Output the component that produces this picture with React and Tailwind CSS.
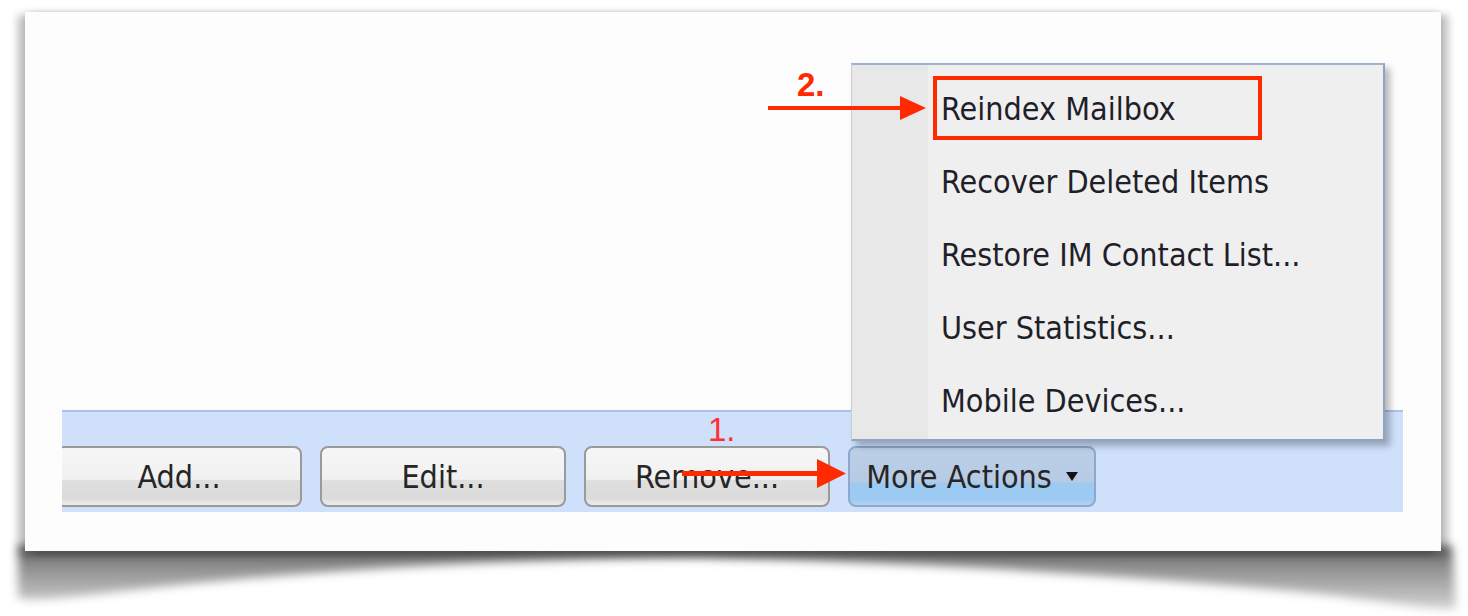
import React from "react";

// Toolbar with an open "More Actions" dropdown, annotated with red arrows

const MENU_ITEMS = [
  "Reindex Mailbox",
  "Recover Deleted Items",
  "Restore IM Contact List...",
  "User Statistics...",
  "Mobile Devices...",
];

const UI_FONT = "font-['DejaVu_Sans_Condensed','DejaVu_Sans',sans-serif]";
const NOTE_FONT = "font-['Liberation_Sans_Narrow','Liberation_Sans',sans-serif]";

function GreyButton({ label, className = "" }) {
  return (
    <button
      className={`h-[61px] w-[246px] shrink-0 rounded-[8px] border-2 border-[#9a9a9a] bg-[linear-gradient(to_bottom,#f6f6f6_0%,#f1f1f1_55%,#dfdfdf_57%,#dadada_88%,#ececec_100%)] text-[32px] leading-none text-[#262626] ${className}`}
    >
      {label}
    </button>
  );
}

function CurlShadow() {
  return (
    <svg className="absolute left-0 top-0" width="1468" height="616" viewBox="0 0 1468 616">
      <defs>
        <filter id="blur" x="-5%" y="-50%" width="110%" height="200%">
          <feGaussianBlur stdDeviation="5" />
        </filter>
        <linearGradient id="shade" x1="0" y1="546" x2="0" y2="610" gradientUnits="userSpaceOnUse">
          <stop offset="0" stopColor="#5a5a5a" />
          <stop offset="0.3" stopColor="#8c8c8c" />
          <stop offset="1" stopColor="#d4d4d4" />
        </linearGradient>
      </defs>
      <path
        d="M18 546 L1452 546 L1456 608 C1440 612 1380 600 1300 592 C1150 578 950 563 700 558 C500 558 300 572 150 588 C80 596 34 602 18 598 Z"
        fill="url(#shade)"
        filter="url(#blur)"
      />
    </svg>
  );
}

export default function App() {
  return (
    <div className={`relative h-[616px] w-[1468px] overflow-hidden bg-white pl-[25px] pt-[12px] ${UI_FONT}`}>
      <CurlShadow />

      {/* Card */}
      <div className="relative h-[539px] w-[1416px] bg-[#fdfdfd] pl-[37px] pt-[398px] shadow-[-7px_3px_8px_rgba(0,0,0,0.26),7px_3px_8px_rgba(0,0,0,0.26),0_-1px_4px_rgba(0,0,0,0.05)]">
        {/* Toolbar strip */}
        <div className="flex h-[102px] w-[1341px] items-start gap-[18px] overflow-hidden border-t-2 border-[#a8c2e9] bg-[#cfe0fb] pt-[34px]">
          <GreyButton label="Add..." className="-ml-[6px]" />
          <GreyButton label="Edit..." />
          <GreyButton label="Remove..." />
          <button className="flex h-[61px] w-[248px] shrink-0 items-center justify-center gap-[14px] rounded-[8px] border-2 border-[#8ea8cc] bg-[linear-gradient(to_bottom,#bdd0e8_0%,#b6cae4_60%,#9ccaf2_62%,#9ccaf2_90%,#b5d1ef_100%)] text-[32px] leading-none text-[#262626]">
            <span>More Actions</span>
            <svg width="12" height="9" viewBox="0 0 12 9">
              <path d="M0 0 L12 0 L6 9 Z" fill="#111" />
            </svg>
          </button>
        </div>

        {/* Dropdown menu */}
        <div className="absolute left-[826px] top-[51px] flex h-[378px] w-[534px] border-2 border-l border-[#8fa3c4] border-l-[#c9ced6] border-t-[#9fb2cf] bg-[#efefef] shadow-[5px_5px_7px_rgba(0,0,0,0.28)]">
          <div className="w-[76px] shrink-0 bg-[#e8e8e8]" />
          <div className="flex flex-col pb-[2px] pt-[7px]">
            {MENU_ITEMS.map((item) => (
              <div key={item} className="flex h-[73px] items-center pl-[13px] text-[32px] leading-none text-[#1f1f2a]">
                {item}
              </div>
            ))}
          </div>
        </div>

        {/* Annotation: highlight box */}
        <div className="absolute left-[908px] top-[64px] h-[64px] w-[329px] border-4 border-[#ff2a00]" />

        {/* Annotation 2 */}
        <span className={`absolute left-[772px] top-[56px] text-[33px] font-bold leading-none text-[#ff2a00] ${NOTE_FONT}`}>2.</span>
        <svg className="absolute left-[743px] top-[81px]" width="160" height="30" viewBox="0 0 160 30">
          <rect x="0" y="13" width="136" height="4" fill="#ff2a00" />
          <path d="M132 3 L158 15 L132 27 Z" fill="#ff2a00" />
        </svg>

        {/* Annotation 1 */}
        <span className={`absolute left-[683px] top-[401px] text-[33px] font-medium leading-none text-[#ff3030] ${NOTE_FONT}`}>1.</span>
        <svg className="absolute left-[657px] top-[447px]" width="166" height="30" viewBox="0 0 166 30">
          <rect x="0" y="12" width="140" height="5" fill="#ff2a00" />
          <path d="M135 0 L164 14.5 L135 29 Z" fill="#ff2a00" />
        </svg>
      </div>
    </div>
  );
}
